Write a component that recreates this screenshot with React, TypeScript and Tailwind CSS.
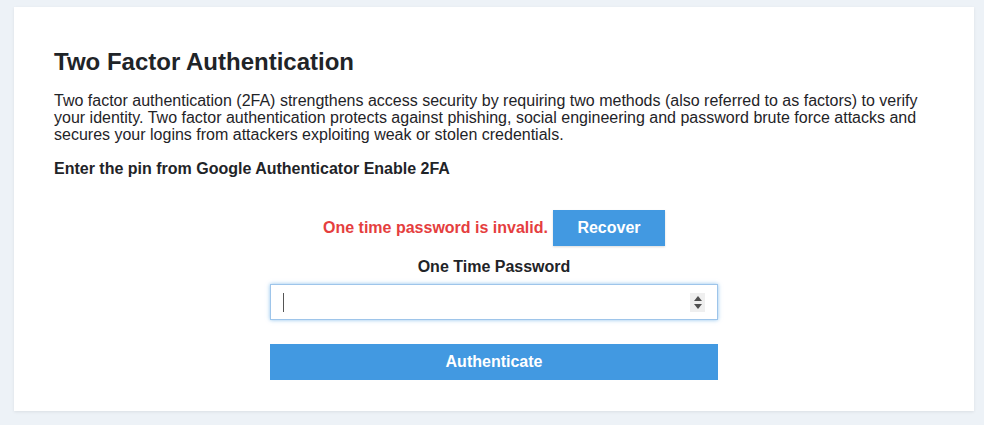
import React from "react";

const App = () => {
  return (
    <div
      className="min-h-screen bg-[#edf2f7] pl-[14px] pr-[10px] pt-[7px] pb-[14px]"
      style={{ fontFamily: '"Liberation Sans", Arial, sans-serif' }}
    >
      <div className="bg-white px-[40px] pt-[39px] pb-[31px] shadow-[0_1px_3px_rgba(0,0,0,0.08)] text-[#1f2428]">
        <h1 className="text-2xl leading-8 font-bold">Two Factor Authentication</h1>
        <p className="mt-[14px] text-base leading-[17px]">
          Two factor authentication (2FA) strengthens access security by requiring two methods (also referred to as
          factors) to verify your identity. Two factor authentication protects against phishing, social engineering
          and password brute force attacks and secures your logins from attackers exploiting weak or stolen
          credentials.
        </p>
        <p className="mt-[17px] text-base leading-[18px] font-bold">
          Enter the pin from Google Authenticator Enable 2FA
        </p>

        <div className="mt-[32px] flex flex-col items-center">
          <div className="flex items-center gap-[5px]">
            <span className="text-base font-bold text-[#e53e3e]">One time password is invalid.</span>
            <button className="h-[36px] w-[112px] bg-[#4299e1] text-base font-bold text-white shadow-[0_1px_2px_rgba(0,0,0,0.15)]">
              Recover
            </button>
          </div>
          <label className="mt-[11px] text-base leading-[20px] font-bold">One Time Password</label>
          <div className="mt-[7px] w-[448px] h-[36px] flex items-center border border-[#9ec5ea] bg-white shadow-[0_0_4px_rgba(66,153,225,0.6)]">
            <span className="ml-[12px] h-[19px] w-px bg-[#555]" />
            <div className="ml-auto mr-[12px] flex h-[19px] w-[15px] flex-col items-center justify-center gap-[3px] bg-[#efefef]">
              <svg width="8" height="5" viewBox="0 0 8 5">
                <path d="M4 0L8 5H0z" fill="#505050" />
              </svg>
              <svg width="8" height="5" viewBox="0 0 8 5">
                <path d="M0 0h8L4 5z" fill="#505050" />
              </svg>
            </div>
          </div>
          <button className="mt-[24px] h-[36px] w-[448px] bg-[#4299e1] text-base font-bold text-white">
            Authenticate
          </button>
        </div>
      </div>
    </div>
  );
};

export default App;
